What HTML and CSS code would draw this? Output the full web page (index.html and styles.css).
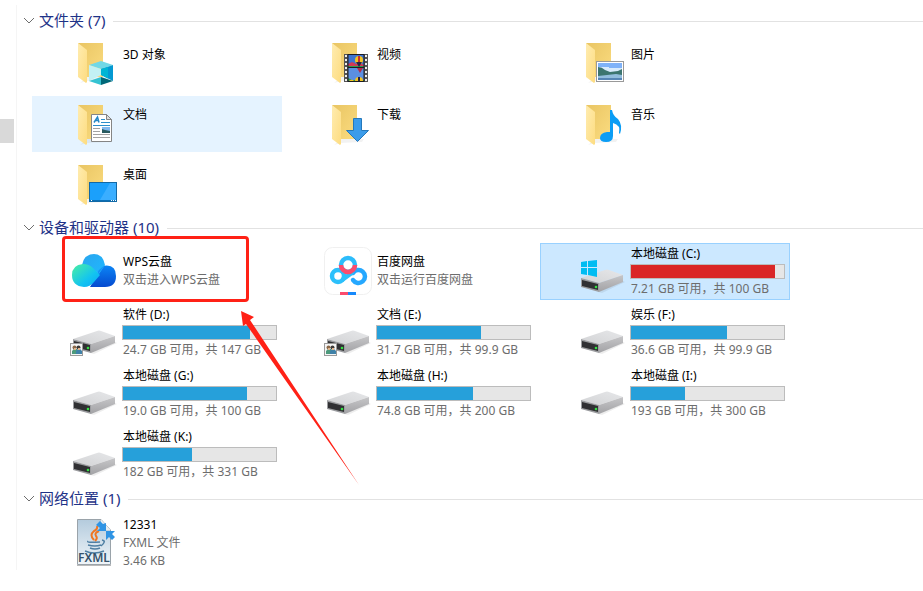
FILE: index.html
```
<!DOCTYPE html>
<html lang="zh-CN">

<head>
    <meta charset="UTF-8">
    <meta name="viewport" content="width=device-width, initial-scale=1.0">
    <title>此电脑</title>
    <link rel="stylesheet" href="styles.css">
</head>

<body>
    <!-- shared icon parts -->
    <svg class="defs" width="0" height="0" aria-hidden="true">
        <defs>
            <linearGradient id="g-back" x1="0" y1="0" x2="1" y2="1">
                <stop offset="0" stop-color="#e9c563" />
                <stop offset="1" stop-color="#fbdc80" />
            </linearGradient>
            <linearGradient id="g-front" x1="0" y1="0" x2="1" y2="1">
                <stop offset="0" stop-color="#ffecb0" />
                <stop offset="1" stop-color="#fddc80" />
            </linearGradient>
            <linearGradient id="g-top" x1="0" y1="1" x2="1" y2="0">
                <stop offset="0" stop-color="#d2d3d5" />
                <stop offset="1" stop-color="#e6e7e9" />
            </linearGradient>
            <linearGradient id="g-side" x1="0" y1="0" x2="0" y2="1">
                <stop offset="0" stop-color="#c6c6c8" />
                <stop offset="1" stop-color="#a2a2a5" />
            </linearGradient>
            <symbol id="folder" viewBox="0 0 48 48">
                <path d="M10 43 L17 37 H40 L38 40 L17 41 Z" fill="#000" opacity=".05" />
                <path d="M8 3 H33 V37 H16 Z" fill="url(#g-back)" />
                <path d="M8 3 L17 10 V42 L16 43 L8 37 Z" fill="url(#g-front)" />
            </symbol>
            <symbol id="drive" viewBox="0 0 48 48">
                <path d="M20 40 L45 29 L47 30 L24 41 Z" fill="#000" opacity=".07" />
                <path d="M3 26 L27 18 Q29 17 31 18 L45 23 L21 31 Z" fill="url(#g-top)" />
                <path d="M21 31 L45 23 V30 L21 40 Z" fill="url(#g-side)" />
                <path d="M3 26 L21 31 V40 L3 35 Z" fill="#9b9c9f" />
                <path d="M4 28 L20 32 V38 L4 34 Z" fill="#303033" />
                <circle cx="18" cy="35" r="1.3" fill="#35e044" />
            </symbol>
            <symbol id="users" viewBox="0 0 14 14">
                <rect x=".5" y=".5" width="12" height="12" fill="#f5f5f5" stroke="#9a9a9a" />
                <path d="M2 11 V8 L4 6 H7 V11 Z" fill="#4d9a7c" />
                <path d="M6 11 V8 L8 6 H10 L12 8 V11 Z" fill="#3f81a8" />
                <circle cx="4.5" cy="4.5" r="2" fill="#8a6848" />
                <circle cx="8.5" cy="4.5" r="2" fill="#3d3a38" />
                <path d="M4 5 h2 v2 h-2 Z M8 5 h2 v2 h-2 Z" fill="#e0b48c" />
            </symbol>
        </defs>
    </svg>

    <div class="window">
        <div class="nav">
            <div class="thumb"></div>
        </div>
        <main class="content">
            <section class="group">
                <button class="group-title">
                    <svg class="chevron" viewBox="0 0 12 12"><path d="M1 4 L6 9 L11 4" /></svg>
                    <span>文件夹 (7)</span>
                </button>
                <div class="items">
                    <a class="item" href="#">
                        <svg class="icon" viewBox="0 0 48 48">
                            <use href="#folder" />
                            <path d="M19 25 L31 21 L43 25 L31 29 Z" fill="#71d8e6" />
                            <path d="M19 25 L31 29 V35 L19 41 Z" fill="#c3f1f4" />
                            <path d="M43 25 L31 29 V35 L43 41 Z" fill="#0499d2" />
                            <path d="M31 29 V35 L38 38.5 V27 Z" fill="#00b5d4" />
                            <path d="M19 41 L31 37 V45 Z" fill="#35c3d2" />
                            <path d="M31 37 L43 41 L31 45 Z" fill="#006878" />
                        </svg>
                        <span class="text"><span class="name">3D 对象</span></span>
                    </a>
                    <a class="item" href="#">
                        <svg class="icon" viewBox="0 0 48 48">
                            <use href="#folder" />
                            <rect x="20" y="14" width="24" height="28" fill="#555" />
                            <path d="M22 15 V42 M42 15 V42" stroke="#eee" stroke-width="2" stroke-dasharray="2 2" />
                            <rect x="24" y="15" width="16" height="12" fill="#3e73cf" />
                            <rect x="24" y="28" width="16" height="13" fill="#5b8fe2" />
                            <path d="M24 24 L28 22 L32 24 L36 23 L40 25 V27 H24 Z" fill="#d23a55" />
                            <path d="M24 26 H40 V27 H24 Z M24 38 L28 40 H40 V41 H24 Z" fill="#2f9a4c" />
                            <circle cx="35" cy="20" r="4" fill="#f4c321" />
                            <path d="M34 16 h2 v8 h-2 Z" fill="#c53030" />
                            <path d="M32 22 L35 27 L38 22 Z" fill="#272443" />
                            <path d="M33 28 h6 l-3 5 Z" fill="#b52d48" />
                            <path d="M31 41 A4 4 0 0 1 39 41 Z M25 41 A3 3 0 0 1 30 41 Z" fill="#f4c321" />
                            <path d="M34 37 h2 v4 h-2 Z" fill="#272443" />
                            <path d="M24 14 V42 M40 14 V42 M24 27.5 H40 M24 41.5 H40 M24 14.5 H40" stroke="#1d1d22" />
                        </svg>
                        <span class="text"><span class="name">视频</span></span>
                    </a>
                    <a class="item" href="#">
                        <svg class="icon" viewBox="0 0 48 48">
                            <use href="#folder" />
                            <rect x="18.5" y="21.5" width="27" height="20" fill="#fff" stroke="#999" />
                            <rect x="20" y="23" width="24" height="9" fill="#7fb2f8" />
                            <path d="M20 27 h11 v1 h13 v4 h-24 Z" fill="#d8ebfc" />
                            <rect x="20" y="35" width="24" height="5" fill="#5685b5" />
                            <path d="M20 27 Q24 27 27 30 L32 32 L40 31 L44 29 V36 L20 37 Z" fill="#3c756f" />
                            <path d="M20 36 L38 34 L44 35 V38 H20 Z" fill="#92bddd" />
                        </svg>
                        <span class="text"><span class="name">图片</span></span>
                    </a>
                    <a class="item hover" href="#">
                        <svg class="icon" viewBox="0 0 48 48">
                            <use href="#folder" y="2" />
                            <path d="M21.5 14.5 H36.5 L41.5 19.5 V41.5 H21.5 Z" fill="#fff" stroke="#858585" />
                            <path d="M36.5 14.5 V19.5 H41.5 Z" fill="#ddd" stroke="#858585" />
                            <path d="M24 22.5 L27.5 17 L29 22.5 M25 20.5 H29" fill="none" stroke="#2487c5" stroke-width="1.5" />
                            <path d="M31 19.5 H35 M31 22.5 H40 M23 25.5 H40" stroke="#2d8fcb" />
                            <path d="M23 28.5 H30 M23 31.5 H30 M23 34.5 H40 M23 37.5 H40" stroke="#a2a2a2" />
                            <rect x="32" y="27" width="8" height="6" fill="#84b9ee" />
                            <path d="M32 29 L35 30 L40 31 V33 H32 Z" fill="#285a5f" />
                        </svg>
                        <span class="text"><span class="name">文档</span></span>
                    </a>
                    <a class="item" href="#">
                        <svg class="icon" viewBox="0 0 48 48">
                            <use href="#folder" y="2" />
                            <path d="M29.5 18.5 H37.5 V30.5 H44.5 L33.5 41.5 L22.5 30.5 H29.5 Z" fill="#3c9cea" stroke="#2478bb" />
                        </svg>
                        <span class="text"><span class="name">下载</span></span>
                    </a>
                    <a class="item" href="#">
                        <svg class="icon" viewBox="0 0 48 48">
                            <use href="#folder" y="2" />
                            <path d="M32 10 H34 Q35 16 40 19 Q45 25 42 34 L41 33 Q43 25 35 23 V36 Q35 42 28 42 Q22 42 22 38 Q22 33 29 32 H32 Z" fill="#0b9df5" />
                        </svg>
                        <span class="text"><span class="name">音乐</span></span>
                    </a>
                    <a class="item" href="#">
                        <svg class="icon" viewBox="0 0 48 48">
                            <use href="#folder" y="2" />
                            <rect x="19.5" y="22.5" width="27" height="19" fill="#1ba0fb" stroke="#1269a6" />
                            <path d="M30 40 L40 23 H46 V40 Z" fill="#3aaeff" />
                            <path d="M20 40.5 H46" stroke="#0b6fb5" />
                            <path d="M21 40.5 h1 M41 40.5 h1 M43 40.5 h1 M45 40.5 h1" stroke="#fff" />
                        </svg>
                        <span class="text"><span class="name">桌面</span></span>
                    </a>
                </div>
            </section>

            <section class="group">
                <button class="group-title">
                    <svg class="chevron" viewBox="0 0 12 12"><path d="M1 4 L6 9 L11 4" /></svg>
                    <span>设备和驱动器 (10)</span>
                </button>
                <div class="items drives">
                    <a class="item" href="#">
                        <svg class="icon" viewBox="0 0 48 48">
                            <defs>
                                <linearGradient id="w-top" x1="0" y1="0" x2="1" y2="1">
                                    <stop offset="0" stop-color="#2aa5ee" />
                                    <stop offset="1" stop-color="#1fb8ff" />
                                </linearGradient>
                                <linearGradient id="w-left" x1="0" y1="0" x2="1" y2="1">
                                    <stop offset="0" stop-color="#4cf0a0" />
                                    <stop offset=".6" stop-color="#13c4f0" />
                                    <stop offset="1" stop-color="#0aa6f8" />
                                </linearGradient>
                                <linearGradient id="w-right" x1="0" y1="0" x2="0" y2="1">
                                    <stop offset="0" stop-color="#0c85f5" />
                                    <stop offset="1" stop-color="#0549cf" />
                                </linearGradient>
                            </defs>
                            <path d="M20 40 L32 19 Q46 16 46 29 Q46 40 35 40 Z" fill="url(#w-right)" />
                            <path d="M12 18 Q14 7 24 7 Q33 7 35 18 L29 27 L20 20 Z" fill="url(#w-top)" />
                            <path d="M35 18 L24 32 L29 23 Z" fill="#168ff6" />
                            <path d="M14 40 Q2 39 2 28 Q2 18 13 17 Q19 17 23 21 L30 28 L24 35 Q20 40 14 40 Z" fill="url(#w-left)" />
                        </svg>
                        <span class="text">
                            <span class="name">WPS云盘</span>
                            <span class="info">双击进入WPS云盘</span>
                        </span>
                    </a>
                    <a class="item" href="#">
                        <svg class="icon" viewBox="0 0 48 48">
                            <rect x=".5" y=".5" width="47" height="47" rx="8" fill="#fff" stroke="#f0f0f0" />
                            <g fill="none" stroke-width="4.5">
                                <circle cx="14" cy="29" r="6" stroke="#2cc0fb" />
                                <path d="M29 26 A6.500 6.500 0 1 1 29 33" stroke="#25a8ff" stroke-linecap="round" />
                                <path d="M18 33 L29 25" stroke="#2cc0fb" />
                                <circle cx="24" cy="18" r="7" stroke="#2cbcfb" />
                                <path d="M17 18 A7 7 0 0 0 31 18" stroke="#fb4c6e" />
                            </g>
                            <path d="M16 45 H24 V48 H16 Z" fill="#fb4c6e" />
                            <path d="M24 45 H32 V48 H24 Z" fill="#1689fb" />
                        </svg>
                        <span class="text">
                            <span class="name">百度网盘</span>
                            <span class="info">双击运行百度网盘</span>
                        </span>
                    </a>
                    <a class="item disk selected" href="#">
                        <svg class="icon" viewBox="0 0 48 48">
                            <use href="#drive" />
                            <path d="M3 10 L9 9 V15 H3 Z M10 9 L19 8 V15 H10 Z M3 16 H9 V23 L3 22 Z M10 16 H19 V25 L10 23 Z" fill="#00bcf2" />
                        </svg>
                        <span class="text">
                            <span class="name">本地磁盘 (C:)</span>
                            <span class="bar"><span class="used full" style="width: 94%"></span></span>
                            <span class="info">7.21 GB 可用，共 100 GB</span>
                        </span>
                    </a>
                    <a class="item disk" href="#">
                        <svg class="icon" viewBox="0 0 48 48">
                            <use href="#drive" />
                            <use href="#users" x="0" y="30" width="14" height="14" />
                        </svg>
                        <span class="text">
                            <span class="name">软件 (D:)</span>
                            <span class="bar"><span class="used" style="width: 83%"></span></span>
                            <span class="info">24.7 GB 可用，共 147 GB</span>
                        </span>
                    </a>
                    <a class="item disk" href="#">
                        <svg class="icon" viewBox="0 0 48 48">
                            <use href="#drive" />
                            <use href="#users" x="0" y="30" width="14" height="14" />
                        </svg>
                        <span class="text">
                            <span class="name">文档 (E:)</span>
                            <span class="bar"><span class="used" style="width: 68%"></span></span>
                            <span class="info">31.7 GB 可用，共 99.9 GB</span>
                        </span>
                    </a>
                    <a class="item disk" href="#">
                        <svg class="icon" viewBox="0 0 48 48"><use href="#drive" /></svg>
                        <span class="text">
                            <span class="name">娱乐 (F:)</span>
                            <span class="bar"><span class="used" style="width: 63%"></span></span>
                            <span class="info">36.6 GB 可用，共 99.9 GB</span>
                        </span>
                    </a>
                    <a class="item disk" href="#">
                        <svg class="icon" viewBox="0 0 48 48"><use href="#drive" /></svg>
                        <span class="text">
                            <span class="name">本地磁盘 (G:)</span>
                            <span class="bar"><span class="used" style="width: 81%"></span></span>
                            <span class="info">19.0 GB 可用，共 100 GB</span>
                        </span>
                    </a>
                    <a class="item disk" href="#">
                        <svg class="icon" viewBox="0 0 48 48"><use href="#drive" /></svg>
                        <span class="text">
                            <span class="name">本地磁盘 (H:)</span>
                            <span class="bar"><span class="used" style="width: 63%"></span></span>
                            <span class="info">74.8 GB 可用，共 200 GB</span>
                        </span>
                    </a>
                    <a class="item disk" href="#">
                        <svg class="icon" viewBox="0 0 48 48"><use href="#drive" /></svg>
                        <span class="text">
                            <span class="name">本地磁盘 (I:)</span>
                            <span class="bar"><span class="used" style="width: 35%"></span></span>
                            <span class="info">193 GB 可用，共 300 GB</span>
                        </span>
                    </a>
                    <a class="item disk" href="#">
                        <svg class="icon" viewBox="0 0 48 48"><use href="#drive" /></svg>
                        <span class="text">
                            <span class="name">本地磁盘 (K:)</span>
                            <span class="bar"><span class="used" style="width: 45%"></span></span>
                            <span class="info">182 GB 可用，共 331 GB</span>
                        </span>
                    </a>
                </div>
            </section>

            <section class="group">
                <button class="group-title">
                    <svg class="chevron" viewBox="0 0 12 12"><path d="M1 4 L6 9 L11 4" /></svg>
                    <span>网络位置 (1)</span>
                </button>
                <div class="items">
                    <a class="item file" href="#">
                        <svg class="icon" viewBox="0 0 48 48">
                            <defs>
                                <linearGradient id="f-page" x1="0" y1="0" x2="0" y2="1">
                                    <stop offset="0" stop-color="#b4cbdd" />
                                    <stop offset="1" stop-color="#f0f5f9" />
                                </linearGradient>
                            </defs>
                            <path d="M7.5 1.5 H31 L40.500 12 V46.5 H7.5 Z" fill="url(#f-page)" stroke="#9aa3aa" />
                            <path d="M7 47.5 H41" stroke="#777" opacity=".5" />
                            <path d="M31 1.5 L40.500 12 H31 Z" fill="#e8eef2" />
                            <path d="M27 8 Q28 11 24 13 Q19 17 24 22 M29 13 Q24 15 26 18 Q28 20 25 23" fill="none" stroke="#ef7622" stroke-width="2" />
                            <path d="M18 23 Q16 25 30 24 M18 27 Q25 29 31 27 M20 30 Q25 32 30 30 M15 33 Q24 37 34 33 M32 22 Q37 23 31 28" fill="none" stroke="#4f7fa3" stroke-width="1.5" />
                            <text class="badge" x="24" y="44" text-anchor="middle">FXML</text>
                            <path d="M26 7 L30 3 L33 6 L36 5 V13 H27 L30 10 Z" fill="#2f94e4" />
                            <path d="M36 13 H45 L42 16 L45 19 L42 22 L39 19 L36 22 Z" fill="#2f94e4" />
                        </svg>
                        <span class="text">
                            <span class="name">12331</span>
                            <span class="info">FXML 文件</span>
                            <span class="info">3.46 KB</span>
                        </span>
                    </a>
                </div>
            </section>
        </main>
    </div>

    <!-- red marker on the WPS item -->
    <div class="mark-box"></div>
    <svg class="mark-arrow" viewBox="0 0 120 176">
        <path d="M0 0 L13 6 L9 9 L118 174 L5 13 L2 15 Z" />
    </svg>
</body>

</html>
```

FILE: styles.css
```
* {
    box-sizing: border-box;
}

body {
    margin: 0;
    background: #fff;
    color: #000;
    font-family: "Noto Sans", "Noto Sans CJK SC", sans-serif;
    font-size: 12px;
    line-height: 18px;
}

.defs {
    position: absolute;
}

.window {
    display: flex;
    padding: 5px 0 15px;
}

.nav {
    width: 17px;
    padding-top: 114px;
    border-right: 1px solid #f5f5f5;
}

.thumb {
    width: 14px;
    height: 24px;
    background: #d9d9d9;
}

.content {
    flex: 1;
}

.group-title {
    display: flex;
    align-items: center;
    width: 100%;
    height: 31px;
    padding: 0 0 2px 6px;
    border: 0;
    background: none;
    color: #1e3287;
    font: inherit;
    font-size: 15px;
    gap: 4px;
}

.group-title::after {
    content: "";
    flex: 1;
    height: 1px;
    margin: 4px 0 0 4px;
    background: #e2e2e2;
}

.chevron {
    width: 12px;
    height: 12px;
    fill: none;
    stroke: #6d6d6d;
}

.items {
    display: grid;
    grid-template-columns: repeat(auto-fill, 250px);
    gap: 4px;
    padding-left: 15px;
}

.item {
    display: flex;
    gap: 4px;
    min-height: 56px;
    padding: 4px 5px 0 38px;
    color: #000;
    text-decoration: none;
}

.drives .item {
    min-height: 57px;
}

.item.hover,
.item:hover {
    background: #e5f3ff;
}

.item.selected {
    background: #cce8ff;
    box-shadow: inset 0 0 0 1px #99d1ff;
}

.icon {
    flex: none;
    width: 48px;
    height: 48px;
}

.text {
    flex: 1;
    padding-top: 6px;
}

.name,
.info {
    display: block;
    padding-left: 1px;
    white-space: nowrap;
}

.info {
    color: #6d6d6d;
}

.drives .disk {
    padding-top: 2px;
}

.disk .icon {
    margin-top: 7px;
}

.disk .text {
    padding-top: 0;
}

.bar {
    display: block;
    height: 15px;
    margin: 1px 0;
    border: 1px solid #bcbcbc;
    background: #e6e6e6;
}

.used {
    display: block;
    height: 100%;
    background: #26a0da;
}

.used.full {
    background: #da2626;
}

.file {
    padding-top: 2px;
}

.file .icon {
    margin-top: 2px;
}

.file .text {
    padding-top: 0;
}

.badge {
    fill: #35526b;
    font-size: 12px;
    font-weight: 600;
}

.mark-box {
    position: absolute;
    top: 236px;
    left: 62px;
    width: 187px;
    height: 66px;
    border: 3px solid #ff2116;
    border-radius: 4px;
}

.mark-arrow {
    position: absolute;
    top: 311px;
    left: 241px;
    width: 120px;
    height: 176px;
    fill: #ff2116;
    pointer-events: none;
}
```
